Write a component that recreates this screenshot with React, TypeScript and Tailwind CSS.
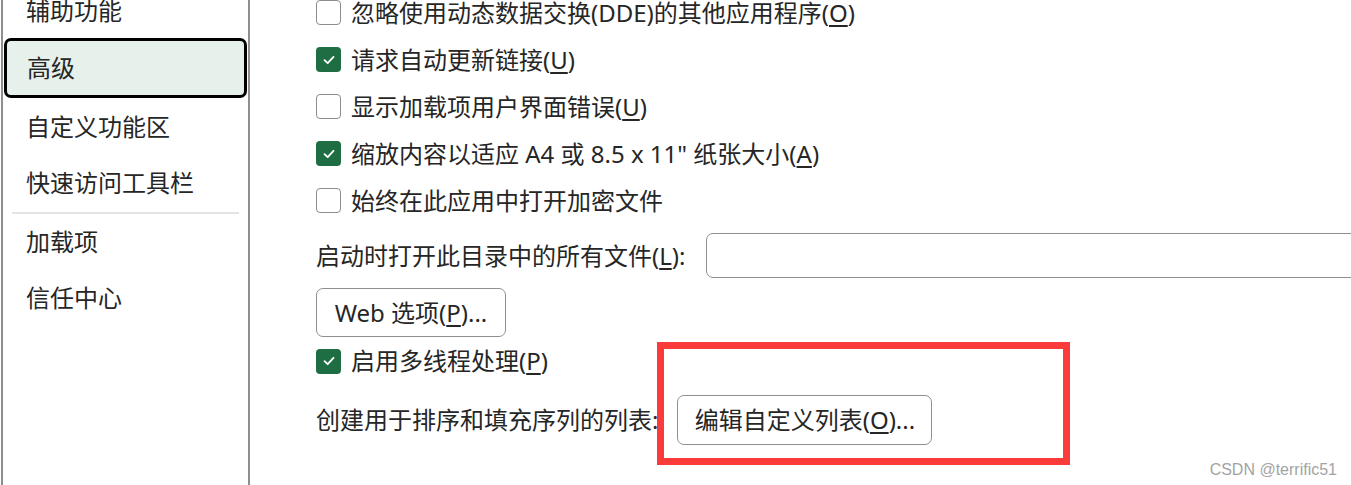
import type { ReactNode } from "react"

function Key({ k }: { k: string }) {
  return <span className="underline underline-offset-[3px] decoration-[1.5px]">{k}</span>
}

function CheckBox({ checked }: { checked: boolean }) {
  if (checked) {
    return (
      <div className="w-[25px] h-[25px] shrink-0 rounded-[4px] bg-[#1f6e43] flex items-center justify-center">
        <svg width="14" height="14" viewBox="0 0 14 14" fill="none">
          <path d="M2.5 7.2 L5.7 10.2 L11.5 3.8" stroke="white" strokeWidth="1.8" strokeLinecap="round" strokeLinejoin="round" />
        </svg>
      </div>
    )
  }
  return <div className="w-[25px] h-[25px] shrink-0 rounded-[4px] border-[1.5px] border-[#8c8c8c] bg-white" />
}

function CheckRow({ checked, children, h = "h-[47px]" }: { checked: boolean; children: ReactNode; h?: string }) {
  return (
    <div className={`flex items-center ${h}`}>
      <CheckBox checked={checked} />
      <span className="ml-[10px] leading-none whitespace-nowrap">{children}</span>
    </div>
  )
}

export default function App() {
  const navTop = [
    { label: "辅助功能", h: "h-[55px]" },
  ]

  return (
    <div className="relative w-[1351px] h-[485px] overflow-hidden bg-white flex text-[24px] text-[#262626] font-['Noto_Sans','Noto_Sans_CJK_SC',sans-serif]">
      {/* left nav */}
      <aside className="ml-px w-[249px] shrink-0 h-full border-l-2 border-r-2 border-[#8e8e8e] flex flex-col">
        {navTop.map((item) => (
          <div key={item.label} className={`${item.h} mt-[-17px] flex items-center pl-[23px] leading-none`}>
            {item.label}
          </div>
        ))}
        <div className="h-[60px] mx-px flex items-center pl-[20px] leading-none rounded-[7px] border-[3px] border-black bg-[#e7f1ec]">
          高级
        </div>
        <div className="h-[57px] flex items-center pl-[23px] leading-none">自定义功能区</div>
        <div className="h-[55px] flex items-center pl-[23px] leading-none">快速访问工具栏</div>
        <div className="h-[2px] mt-[2px] mx-[9px] bg-[#e3e3e3]" />
        <div className="h-[56px] flex items-center pl-[23px] leading-none">加载项</div>
        <div className="h-[55px] flex items-center pl-[23px] leading-none">信任中心</div>
      </aside>

      {/* options */}
      <main className="flex-1 min-w-0 pl-[66px] flex flex-col">
        <div className="mt-[-11px] mb-[1px]">
          <CheckRow checked={false}>
            忽略使用动态数据交换(DDE)的其他应用程序(<Key k="O" />)
          </CheckRow>
          <CheckRow checked>
            请求自动更新链接(<Key k="U" />)
          </CheckRow>
          <CheckRow checked={false}>
            显示加载项用户界面错误(<Key k="U" />)
          </CheckRow>
          <CheckRow checked>
            缩放内容以适应 A4 或 8.5 x 11" 纸张大小(<Key k="A" />)
          </CheckRow>
          <CheckRow checked={false}>始终在此应用中打开加密文件</CheckRow>
        </div>

        <div className="mt-[8px] h-[45px] flex items-center gap-[21px]">
          <span className="leading-none whitespace-nowrap">
            启动时打开此目录中的所有文件(<Key k="L" />):
          </span>
          <div className="h-[45px] w-[700px] shrink-0 rounded-[7px] border-[1.5px] border-[#8f8f8f] bg-white" />
        </div>

        <div className="mt-[10px]">
          <div className="w-[190px] h-[49px] rounded-[7px] border-[1.5px] border-[#8f8f8f] flex items-center justify-center leading-none whitespace-nowrap">
            Web 选项(<Key k="P" />)...
          </div>
        </div>

        <CheckRow checked h="h-[48px]">
          启用多线程处理(<Key k="P" />)
        </CheckRow>

        <div className="mt-[10px] h-[50px] flex items-center gap-[19px]">
          <span className="leading-none whitespace-nowrap">创建用于排序和填充序列的列表:</span>
          <div className="w-[255px] h-[50px] shrink-0 rounded-[7px] border-[1.5px] border-[#8f8f8f] flex items-center justify-center leading-none whitespace-nowrap">
            编辑自定义列表(<Key k="O" />)...
          </div>
        </div>
      </main>

      {/* annotation */}
      <div className="absolute left-[657px] top-[342px] w-[413px] h-[123px] border-[7px] border-[#fb3a3a]" />

      {/* watermark */}
      <div className="absolute right-[14px] bottom-[7px] text-[16px] leading-none text-[#a3a3a3] font-['Liberation_Sans',sans-serif]">
        CSDN @terrific51
      </div>
    </div>
  )
}
